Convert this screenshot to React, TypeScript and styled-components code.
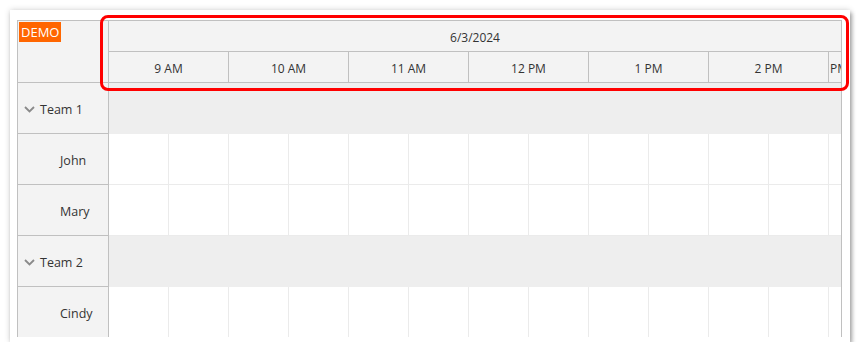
import React from 'react'
import styled, { createGlobalStyle } from 'styled-components'

const GlobalStyle = createGlobalStyle`
  html, body {
    margin: 0;
    padding: 0;
    background: #ffffff;
  }
  body {
    font-family: "Open Sans", "Noto Sans", "Liberation Sans", sans-serif;
    font-size: 12px;
    color: #333333;
  }
`

const Card = styled.div`
  position: relative;
  box-sizing: border-box;
  margin: 10px 0 0 10px;
  width: 840px;
  height: 332px;
  padding: 10px 8px 5px 7px;
  background: #ffffff;
  box-shadow: 0 0 6px rgba(0, 0, 0, 0.18), 2px 3px 4px rgba(0, 0, 0, 0.3);
`

const Scheduler = styled.div`
  box-sizing: border-box;
  width: 825px;
  height: 317px;
  overflow: hidden;
  border: 1px solid #c0c0c0;
  border-bottom: none;
  display: flex;
  flex-direction: column;
`

const Row = styled.div<{ $height: number }>`
  display: flex;
  flex: 0 0 auto;
  height: ${p => p.$height}px;
`

const Corner = styled.div`
  box-sizing: border-box;
  width: 91px;
  flex: 0 0 auto;
  background: #f3f3f3;
  border-right: 1px solid #c0c0c0;
  border-bottom: 1px solid #c0c0c0;
  padding: 1px 0 0 1px;
`

const Demo = styled.span`
  display: inline-block;
  background: #ff6600;
  color: #ffffff;
  font-size: 13px;
  line-height: 20px;
  padding: 0 2px;
`

const TimeHeader = styled.div`
  flex: 1;
  display: flex;
  flex-direction: column;
  background: #f3f3f3;
  min-width: 0;
`

const DateRow = styled.div`
  box-sizing: border-box;
  height: 31px;
  padding-top: 2px;
  border-bottom: 1px solid #c0c0c0;
  display: flex;
  align-items: center;
  justify-content: center;
`

const HourRow = styled.div`
  box-sizing: border-box;
  height: 31px;
  border-bottom: 1px solid #c0c0c0;
  display: flex;
  overflow: hidden;
`

const HourCell = styled.div<{ $width: number; $partial?: boolean }>`
  box-sizing: border-box;
  flex: 0 0 ${p => p.$width}px;
  border-right: 1px solid #c0c0c0;
  display: flex;
  align-items: center;
  justify-content: ${p => (p.$partial ? 'flex-start' : 'center')};
  padding: 2px 0 0 ${p => (p.$partial ? '1px' : '0')};
  overflow: hidden;
  white-space: nowrap;
`

const RowHeader = styled.div<{ $group?: boolean }>`
  box-sizing: border-box;
  width: 91px;
  flex: 0 0 auto;
  background: #f3f3f3;
  border-right: 1px solid #c0c0c0;
  border-bottom: 1px solid #c0c0c0;
  display: flex;
  align-items: center;
  padding: 2px 0 0 ${p => (p.$group ? '6px' : '42px')};
  font-size: 12.5px;
  gap: 5px;
`

const Lane = styled.div<{ $group?: boolean }>`
  box-sizing: border-box;
  flex: 1;
  min-width: 0;
  display: flex;
  overflow: hidden;
  background: ${p => (p.$group ? '#eeeeee' : '#ffffff')};
  border-bottom: 1px solid ${p => (p.$group ? '#eeeeee' : '#ebebeb')};
`

const Cell = styled.div`
  box-sizing: border-box;
  flex: 0 0 60px;
  border-right: 1px solid #ebebeb;
`

const Highlight = styled.div`
  position: absolute;
  left: 90px;
  top: 5px;
  width: 749px;
  height: 76px;
  box-sizing: border-box;
  border: 3px solid #ff0000;
  border-radius: 8px;
  pointer-events: none;
`

const Chevron = () => (
  <svg width="11" height="7" viewBox="0 0 11 7">
    <polyline points="1,1 5.5,5.5 10,1" fill="none" stroke="#8a8a8a" strokeWidth="1.8" />
  </svg>
)

const hours = ['9 AM', '10 AM', '11 AM', '12 PM', '1 PM', '2 PM']

const resources = [
  { name: 'Team 1', group: true },
  { name: 'John' },
  { name: 'Mary' },
  { name: 'Team 2', group: true },
  { name: 'Cindy' },
]

export default function App() {
  return (
    <>
      <GlobalStyle />
      <Card>
        <Scheduler>
          <Row $height={62}>
            <Corner>
              <Demo>DEMO</Demo>
            </Corner>
            <TimeHeader>
              <DateRow>6/3/2024</DateRow>
              <HourRow>
                {hours.map(h => (
                  <HourCell key={h} $width={120}>{h}</HourCell>
                ))}
                <HourCell $width={13} $partial>PM</HourCell>
              </HourRow>
            </TimeHeader>
          </Row>
          {resources.map((r, i) => (
            <Row key={'res' + i} $height={51}>
              <RowHeader $group={r.group}>
                {r.group && <Chevron />}
                {r.name}
              </RowHeader>
              <Lane $group={r.group}>
                {!r.group &&
                  Array.from({ length: 13 }).map((_, j) => <Cell key={'c' + j} />)}
              </Lane>
            </Row>
          ))}
        </Scheduler>
        <Highlight />
      </Card>
    </>
  )
}
